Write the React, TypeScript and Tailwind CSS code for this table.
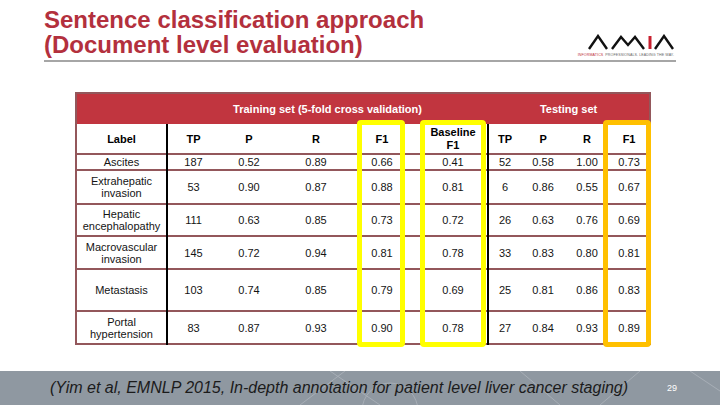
import React from 'react';

type Row = { label: string[]; train: string[]; base: string; test: string[]; h: string };

const ROWS: Row[] = [
  { label: ['Ascites'], train: ['187', '0.52', '0.89', '0.66'], base: '0.41', test: ['52', '0.58', '1.00', '0.73'], h: 'h-[16px]' },
  { label: ['Extrahepatic', 'invasion'], train: ['53', '0.90', '0.87', '0.88'], base: '0.81', test: ['6', '0.86', '0.55', '0.67'], h: 'h-[34px]' },
  { label: ['Hepatic', 'encephalopathy'], train: ['111', '0.63', '0.85', '0.73'], base: '0.72', test: ['26', '0.63', '0.76', '0.69'], h: 'h-[32px]' },
  { label: ['Macrovascular', 'invasion'], train: ['145', '0.72', '0.94', '0.81'], base: '0.78', test: ['33', '0.83', '0.80', '0.81'], h: 'h-[33px]' },
  { label: ['Metastasis'], train: ['103', '0.74', '0.85', '0.79'], base: '0.69', test: ['25', '0.81', '0.86', '0.83'], h: 'h-[42px]' },
  { label: ['Portal', 'hypertension'], train: ['83', '0.87', '0.93', '0.90'], base: '0.78', test: ['27', '0.84', '0.93', '0.89'], h: 'h-[33px]' },
];

const COLS = [91, 52, 60, 74, 58, 8, 69, 33, 44, 44, 41];

function AmiaLogo() {
  return (
    <div className="flex flex-col items-end">
      <svg width="86" height="16" viewBox="0 0 86 16" fill="none" strokeWidth="2.4" strokeLinejoin="miter">
        <polyline points="1,15 10,2 19,15" stroke="#111" />
        <polyline points="24,15 33,3 40,11 47,3 56,15" stroke="#111" />
        <line x1="62" y1="2" x2="62" y2="15" stroke="#c8202f" strokeWidth="3" />
        <polyline points="67,15 76,2 85,15" stroke="#111" />
      </svg>
      <div className="mt-[3px] flex gap-[2px] text-[3.6px] leading-[4px] tracking-[0.1px]">
        <span className="text-[#c0303c]">INFORMATICS</span>
        <span className="text-[#666]">PROFESSIONALS. LEADING THE WAY.</span>
      </div>
    </div>
  );
}

function Cell({ children, className = '' }: { children: React.ReactNode; className?: string }) {
  return <td className={`p-0 text-center align-middle ${className}`}>{children}</td>;
}

export default function App() {
  return (
    <div className="relative flex h-[405px] w-[720px] flex-col overflow-hidden bg-white font-['Liberation_Sans',Arial,sans-serif]">
      <div className="mx-[44px] flex items-end justify-between border-b-2 border-[#a6a6a6] pt-[7px] pb-[3px]">
        <h1 className="text-[24px] font-bold leading-[25px] text-[#b3303d]">
          Sentence classification approach
          <br />
          (Document level evaluation)
        </h1>
        <div className="mr-[2px]">
          <AmiaLogo />
        </div>
      </div>

      <div className="relative ml-[75px] mt-[30px] w-[574px]">
        <table className="w-[574px] table-fixed border-collapse border-2 border-[#93575b] text-[11px] leading-[12px] text-[#141414]">
          <colgroup>
            {COLS.map((w, i) => (
              <col key={i} style={{ width: w }} />
            ))}
          </colgroup>
          <thead>
            <tr className="h-[31px] bg-[#c1353f] font-bold text-white">
              <th className="p-0" />
              <th colSpan={6} className="p-0 text-center font-bold">
                Training set (5-fold cross validation)
              </th>
              <th colSpan={4} className="p-0 text-center font-bold">
                Testing set
              </th>
            </tr>
            <tr className="h-[30px] border-b-2 border-[#93575b] font-bold text-black">
              <th className="border-r-2 border-r-black p-0">Label</th>
              <th className="p-0">TP</th>
              <th className="p-0">P</th>
              <th className="p-0">R</th>
              <th className="p-0">F1</th>
              <th className="p-0" />
              <th className="border-r-2 border-r-black p-0 leading-[13px]">
                Baseline
                <br />
                F1
              </th>
              <th className="p-0">TP</th>
              <th className="p-0">P</th>
              <th className="p-0">R</th>
              <th className="p-0">F1</th>
            </tr>
          </thead>
          <tbody>
            {ROWS.map((r) => (
              <tr key={r.label.join(' ')} className={`${r.h} border-b-2 border-[#93575b]`}>
                <Cell className="border-r-2 border-r-black">
                  {r.label.map((l, i) => (
                    <div key={i}>{l}</div>
                  ))}
                </Cell>
                {r.train.map((v, i) => (
                  <Cell key={i}>{v}</Cell>
                ))}
                <Cell>{''}</Cell>
                <Cell className="border-r-2 border-r-black">{r.base}</Cell>
                {r.test.map((v, i) => (
                  <Cell key={i}>{v}</Cell>
                ))}
              </tr>
            ))}
          </tbody>
        </table>

        <div className="pointer-events-none absolute left-[282px] top-[28px] h-[227px] w-[48px] rounded-[4px] border-[5px] border-[#ffff00]" />
        <div className="pointer-events-none absolute left-[345px] top-[28px] h-[227px] w-[66px] rounded-[4px] border-[5px] border-[#ffff00]" />
        <div className="pointer-events-none absolute left-[528px] top-[28px] h-[227px] w-[48px] rounded-[4px] border-[5px] border-[#ffc000]" />
      </div>

      <div className="relative mt-auto h-[34px] bg-[#8f98a1]">
        <svg className="absolute inset-0" width="720" height="34" viewBox="0 0 720 34" fill="none" stroke="#a7aeb6" strokeWidth="1">
          <line x1="300" y1="34" x2="345" y2="0" />
          <line x1="330" y1="0" x2="380" y2="34" />
          <circle cx="390" cy="40" r="28" />
          <line x1="520" y1="0" x2="560" y2="34" />
          <line x1="600" y1="34" x2="640" y2="0" />
          <line x1="690" y1="0" x2="720" y2="20" />
        </svg>
        <div className="relative flex h-full items-center">
          <span className="ml-[50px] text-[16px] italic leading-[18px] text-[#1b1b1b]">
            (Yim et al, EMNLP 2015, In-depth annotation for patient level liver cancer staging)
          </span>
          <span className="absolute left-[667px] top-[12px] text-[9px] leading-[10px] text-white">29</span>
        </div>
      </div>
    </div>
  );
}
